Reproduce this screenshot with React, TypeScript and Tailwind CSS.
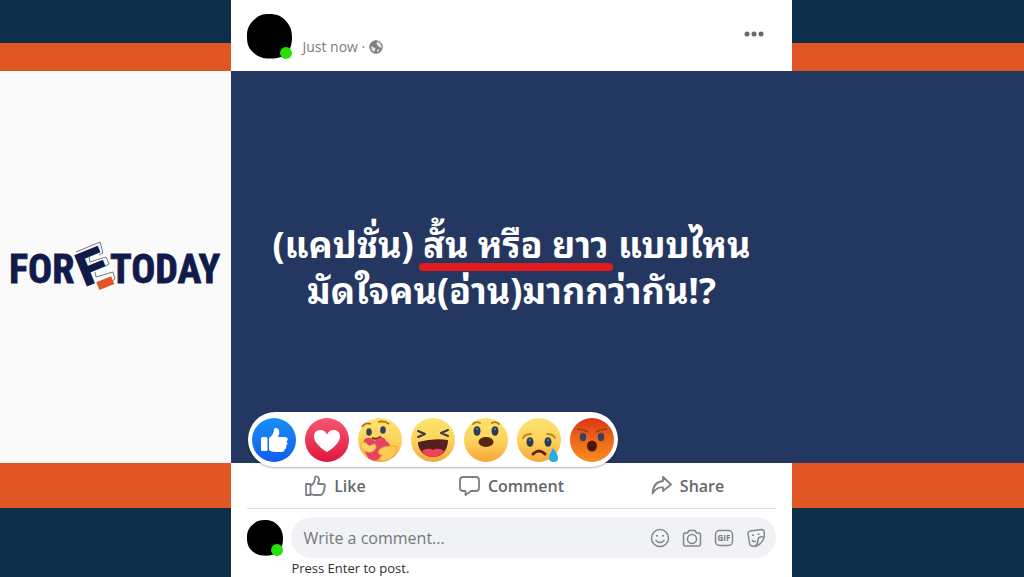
import React from "react";

const Stripes: React.FC<{ fill: string; children?: React.ReactNode }> = ({
  fill,
  children,
}) => (
  <>
    <div className="h-[43px] bg-[#0b2f4a]" />
    <div className="h-7 bg-[#e05625]" />
    <div className={`flex flex-1 items-center justify-center ${fill}`}>
      {children}
    </div>
    <div className="h-[45px] bg-[#e05625]" />
    <div className="h-[69px] bg-[#0b2f4a]" />
  </>
);

const Logo: React.FC = () => (
  <svg
    viewBox="0 0 212 56"
    className="w-[212px] max-w-full overflow-visible"
    role="img"
    aria-label="FORETODAY"
  >
    <g
      fill="#111b4b"
      stroke="#111b4b"
      strokeWidth="0.8"
      fontWeight="700"
      fontSize="40"
      fontFamily="'Roboto Condensed','DejaVu Sans Condensed',sans-serif"
    >
      <text x="-1" y="44">
        FOR
      </text>
      <text x="100" y="44">
        TODAY
      </text>
    </g>
    <path
      d="M66 13L90 3L93 14L89 16M79 18L80 23L96 18L99 25L95 27M85 33L86 38L103 33L105 40L102 42"
      fill="none"
      stroke="#39415f"
      strokeWidth="0.7"
    />
    <g transform="translate(64 16) rotate(-22)">
      <text
        x="-2"
        y="33"
        fontSize="46"
        fontWeight="700"
        fill="#111b4b"
        stroke="#111b4b"
        strokeWidth="2"
        fontFamily="'Liberation Sans',sans-serif"
      >
        F
      </text>
      <rect x="10.5" y="33.5" width="16" height="8.5" fill="#e05625" />
    </g>
  </svg>
);

const Avatar: React.FC<{ size: string }> = ({ size }) => (
  <div className={`relative shrink-0 ${size}`}>
    <svg viewBox="0 0 45 45" className="h-full w-full" aria-hidden="true">
      <path
        d="M22 0C30 0 34 2 38 6C43 11 45 16 45 23C45 31 43 37 38 41C33 44 27 45 20 44.5C12 44 7 40 3 35C0 30 0 26 0 21C0 14 3 9 8 5C12 1 16 0 22 0Z"
        fill="#000"
      />
    </svg>
    <span className="absolute right-0 bottom-0 h-3 w-3 rounded-full bg-[#27e006]" />
  </div>
);

const Eyes: React.FC<{ y: number; dx?: number }> = ({ y, dx = 9 }) => (
  <g>
    <ellipse cx={22 - dx} cy={y} rx="3.5" ry="4.8" fill="#2b3a55" />
    <ellipse cx={22 + dx} cy={y} rx="3.5" ry="4.8" fill="#2b3a55" />
    <circle cx={22 - dx} cy={y - 2} r="1.3" fill="#58719b" />
    <circle cx={22 + dx} cy={y - 2} r="1.3" fill="#58719b" />
  </g>
);

const reactions = [
  {
    name: "Like",
    face: "url(#blue)",
    art: (
      <g fill="#fff">
        <rect x="9" y="19" width="6.5" height="14" rx="1.5" />
        <path d="M17 20C20 18 22 15 22 11.5C22 9.5 25 9.5 26.5 11.5C28 14 27 17 26 19H33C36 19 36.5 22 34.5 23.5C36 25 35.5 27 34 27.5C35 29.5 34 31 32.5 31.5C33 33 31.5 34 29.5 34H23C20 34 18.5 33 17 32Z" />
      </g>
    ),
  },
  {
    name: "Love",
    face: "url(#red)",
    art: (
      <path
        d="M22 34C17 31 9 25 9 18.5C9 14 12 12 15.5 12C18.5 12 21 14 22 16.5C23 14 25.5 12 28.5 12C32 12 35 14 35 18.5C35 25 27 31 22 34Z"
        fill="#fff"
      />
    ),
  },
  {
    name: "Care",
    face: "url(#yellow)",
    art: (
      <g>
        <path
          d="M4 9Q7 4 13 6M20 4Q26 2 31 6"
          fill="none"
          stroke="#b56b17"
          strokeWidth="1.8"
        />
        <ellipse cx="11" cy="14" rx="2.8" ry="3.8" fill="#38415a" />
        <ellipse cx="25" cy="12" rx="2.8" ry="3.8" fill="#38415a" />
        <path
          d="M14 20Q19 22 23 18.5"
          fill="none"
          stroke="#6e2d19"
          strokeWidth="2"
        />
        <path
          d="M10 40C9 36 3 29 6 22C9 18 14 20 17 23C20 18 27 18 28 23C34 26 33 32 28 35C24 39 20 42 16 43Q13 42 10 40Z"
          fill="#e74360"
        />
        <path
          d="M3 25C6 23 9 25 11 28L16 26C20 27 18 33 13 34C7 35 2 31 3 25Z"
          fill="#ffd363"
          stroke="#e79c38"
          strokeWidth="0.7"
        />
        <path
          d="M39 29C32 27 26 28 22 31C19 34 21 38 25 37C21 39 20 42 24 43C31 43 38 38 39 29Z"
          fill="#ffca50"
          stroke="#e79c38"
          strokeWidth="0.7"
        />
      </g>
    ),
  },
  {
    name: "Haha",
    face: "url(#yellow)",
    art: (
      <g>
        <path
          d="M7 13L14 16L7 19M37 12L30 15L37 18"
          fill="none"
          stroke="#3b3a43"
          strokeWidth="2"
          strokeLinecap="round"
          strokeLinejoin="round"
        />
        <path
          d="M7 24Q22 20 37 22C37 32 31 39 22 39C13 39 7 32 7 24Z"
          fill="#54211f"
        />
        <path
          d="M11 33Q16 29 22 32Q28 29 33 33Q29 39 22 39Q15 39 11 33Z"
          fill="#ee425d"
        />
      </g>
    ),
  },
  {
    name: "Wow",
    face: "url(#yellow)",
    art: (
      <g>
        <path
          d="M9 6Q12 3 16 5M28 5Q32 3 35 6"
          fill="none"
          stroke="#ba7a1a"
          strokeWidth="1.8"
          strokeLinecap="round"
        />
        <Eyes y={13} />
        <ellipse cx="22" cy="24" rx="7.5" ry="5" fill="#5a250d" />
      </g>
    ),
  },
  {
    name: "Sad",
    face: "url(#yellow)",
    art: (
      <g>
        <path
          d="M6 20Q8 16 14 16M30 16Q36 16 38 20"
          fill="none"
          stroke="#c28624"
          strokeWidth="1.8"
          strokeLinecap="round"
        />
        <Eyes y={24} />
        <path
          d="M16 36Q22 30 28 36"
          fill="none"
          stroke="#5a250d"
          strokeWidth="3"
          strokeLinecap="round"
        />
        <path
          d="M36 30C39 34 41 37 41 40C41 43 39 44 36.5 44C34 44 32 43 32 40C32 37 34 34 36 30Z"
          fill="#27aae9"
        />
      </g>
    ),
  },
  {
    name: "Angry",
    face: "url(#orange)",
    art: (
      <g>
        <path
          d="M7 11Q13 11 18 14M26 14Q31 11 37 11"
          fill="none"
          stroke="#a83a10"
          strokeWidth="1.6"
        />
        <ellipse cx="13" cy="19" rx="3.2" ry="4.2" fill="#39405b" />
        <ellipse cx="31" cy="19" rx="3.2" ry="4.2" fill="#39405b" />
        <ellipse cx="22" cy="28" rx="5" ry="5.5" fill="#4c160a" />
      </g>
    ),
  },
];

const Reactions: React.FC = () => (
  <div className="absolute -bottom-1 left-[17px] flex gap-[9px] rounded-full bg-white px-1 pt-1.5 pb-[5px] shadow-[0_1px_2px_rgba(0,0,0,0.3)]">
    <svg className="absolute h-0 w-0" aria-hidden="true">
      <defs>
        <linearGradient id="blue" x2="0" y2="1">
          <stop stopColor="#188ff5" />
          <stop offset="1" stopColor="#125df0" />
        </linearGradient>
        <linearGradient id="red" x2="0" y2="1">
          <stop stopColor="#f65770" />
          <stop offset="1" stopColor="#df1740" />
        </linearGradient>
        <linearGradient id="yellow" x2="0" y2="1">
          <stop stopColor="#fce36f" />
          <stop offset="0.5" stopColor="#fcd45d" />
          <stop offset="1" stopColor="#f6a637" />
        </linearGradient>
        <linearGradient id="orange" x2="0" y2="1">
          <stop stopColor="#dc3510" />
          <stop offset="0.5" stopColor="#ef671b" />
          <stop offset="1" stopColor="#f58d20" />
        </linearGradient>
      </defs>
    </svg>
    {reactions.map((r) => (
      <button key={r.name} type="button" aria-label={r.name}>
        <svg viewBox="0 0 44 44" className="h-11 w-11">
          <circle cx="22" cy="22" r="22" fill={r.face} />
          {r.art}
        </svg>
      </button>
    ))}
  </div>
);

const actions = [
  {
    label: "Like",
    icon: (
      <path d="M1 9H5.5V20H1ZM5.5 11C9 9 10 6 10 2.5C10 .5 13.5 1 14 4C14.2 6 13.5 7.5 13 9H18C20.5 9 20.5 12 19 13C20 14.5 19.5 15.5 18.5 16C19 17.5 18.5 18 17.5 18.5C17.5 20 16.5 20 15 20H9C7.5 20 6.5 19 5.5 18.5" />
    ),
  },
  {
    label: "Comment",
    icon: (
      <path d="M4 2H17Q20 2 20 5V13Q20 16 17 16H12L6.5 20V16H4Q1 16 1 13V5Q1 2 4 2Z" />
    ),
  },
  {
    label: "Share",
    icon: (
      <path d="M12 2L20 9.5L12 16V12.5C7 12 4 14 1.5 18.5C2 10.5 6 6.5 12 6Z" />
    ),
  },
];

const tools = [
  {
    label: "Emoji",
    icon: (
      <>
        <circle cx="10" cy="10" r="8.5" />
        <path d="M5.5 12Q10 17 14.5 12" />
        <path d="M7 7V8.5M13 7V8.5" strokeWidth="2" />
      </>
    ),
  },
  {
    label: "Photo",
    icon: (
      <>
        <path d="M3 5H5.5L7 2.5H13L14.5 5H17Q18.5 5 18.5 7V16Q18.5 18 16.5 18H3.5Q1.5 18 1.5 16V7Q1.5 5 3 5Z" />
        <circle cx="10" cy="11" r="4.5" />
      </>
    ),
  },
  {
    label: "GIF",
    icon: (
      <>
        <rect x="1.5" y="2.5" width="17" height="15" rx="4" />
        <text
          x="10"
          y="13"
          textAnchor="middle"
          fontSize="8"
          fontWeight="700"
          fill="#777b80"
          stroke="none"
        >
          GIF
        </text>
      </>
    ),
  },
  {
    label: "Sticker",
    icon: (
      <>
        <path d="M4 3L15.5 1.5Q18 1.5 18.3 4L18 10Q15 17 9 18.5L6 18Q4 18 3.5 15L2 5.5Q2 3.5 4 3Z" />
        <path d="M18 9Q12 8 12 12Q12 16 9 18.5M6 12Q8 14.5 10 13" />
        <path d="M7 6.5V8M12.5 5.5V7" strokeWidth="2" />
      </>
    ),
  },
];

const App: React.FC = () => (
  <div className="flex min-h-screen bg-[#243761] font-['Open_Sans','Noto_Sans',sans-serif]">
    <aside className="flex w-[22.6%] flex-col">
      <Stripes fill="bg-[#fafafa] px-2">
        <Logo />
      </Stripes>
    </aside>

    <main className="flex w-[54.7%] flex-col bg-white">
      <header className="flex h-[71px] items-center justify-between px-4">
        <div className="flex items-end gap-2.5 pt-0.5">
          <Avatar size="h-[45px] w-[45px]" />
          <p className="flex items-center gap-1 pb-0.5 text-sm text-[#7b7e83]">
            Just now ·
            <svg viewBox="0 0 14 14" className="h-3.5 w-3.5" aria-hidden="true">
              <circle cx="7" cy="7" r="6.3" fill="#7c7f84" stroke="#7c7f84" />
              <path
                d="M8 1.5L11 3L12.5 6V8L10 7L8.5 5.5L7.5 4ZM2 6L4 7L6.5 8.5L6 10.5L5 12L2.5 9.5ZM8 10L10.5 9L9.5 11.5L8 12Z"
                fill="#e2e4e6"
              />
            </svg>
          </p>
        </div>
        <button type="button" aria-label="More" className="mr-3 mb-1">
          <svg viewBox="0 0 20 6" className="h-1.5 w-5" fill="#66686c">
            <circle cx="3" cy="3" r="2.5" />
            <circle cx="10" cy="3" r="2.5" />
            <circle cx="17" cy="3" r="2.5" />
          </svg>
        </button>
      </header>

      <section className="relative flex flex-1 items-center justify-center bg-[#243761] pb-1">
        <h1 className="text-center font-['Noto_Sans_Thai_Looped','Noto_Sans_Thai','Noto_Sans',sans-serif] text-4xl leading-[46px] font-bold whitespace-nowrap text-white">
          (แคปชั่น){" "}
          <span className="relative after:absolute after:-inset-x-1 after:bottom-0 after:h-2 after:rounded-full after:bg-[#e41b1d]">
            สั้น หรือ ยาว
          </span>{" "}
          แบบไหน
          <br />
          มัดใจคน(อ่าน)มากกว่ากัน!?
        </h1>
        <Reactions />
      </section>

      <footer className="px-4">
        <div className="grid h-[46px] grid-cols-3 border-b border-[#dcdddf]">
          {actions.map((a) => (
            <button
              key={a.label}
              type="button"
              className="flex items-center justify-center gap-2 text-base font-semibold text-[#65676b]"
            >
              <svg
                viewBox="0 0 21 21"
                className="h-[21px] w-[21px]"
                fill="none"
                stroke="#7c7f84"
                strokeWidth="1.8"
                strokeLinejoin="round"
              >
                {a.icon}
              </svg>
              {a.label}
            </button>
          ))}
        </div>
        <div className="flex items-center gap-2 pt-2">
          <Avatar size="h-9 w-9" />
          <div className="flex h-[41px] min-w-0 flex-1 items-center rounded-full bg-[#f0f2f5] pr-2.5 pl-3">
            <input
              aria-label="Write a comment"
              placeholder="Write a comment..."
              className="min-w-0 flex-1 bg-transparent text-base text-[#65676b] outline-none placeholder:text-[#75787d]"
            />
            <div className="flex gap-3">
              {tools.map((t) => (
                <button key={t.label} type="button" aria-label={t.label}>
                  <svg
                    viewBox="0 0 20 20"
                    className="h-5 w-5"
                    fill="none"
                    stroke="#85888d"
                    strokeWidth="1.5"
                    strokeLinejoin="round"
                  >
                    {t.icon}
                  </svg>
                </button>
              ))}
            </div>
          </div>
        </div>
        <p className="h-[19px] pl-11 text-[13px] leading-5 text-[#303134]">
          Press Enter to post.
        </p>
      </footer>
    </main>

    <aside className="flex flex-1 flex-col">
      <Stripes fill="bg-[#243761]" />
    </aside>
  </div>
);

export default App;
